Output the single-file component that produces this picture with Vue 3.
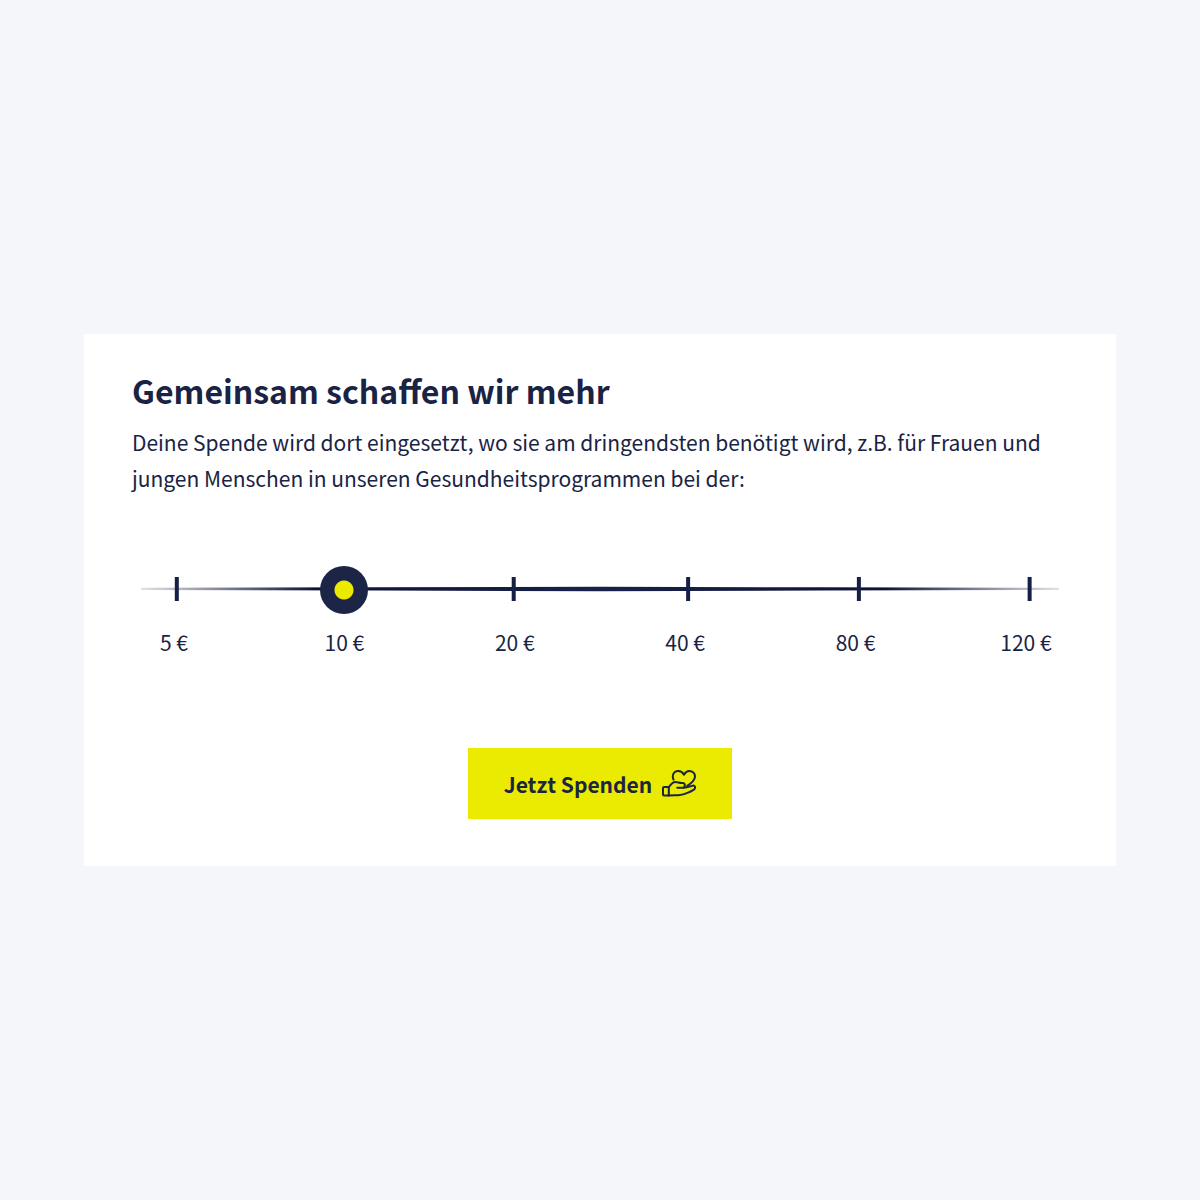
<script setup>
import { ref } from 'vue'

const amounts = [5, 10, 20, 40, 80, 120]
const selected = ref(1)

// Tick positions along the scale, in percent of its width
const ticks = [3.9, 22.2, 40.6, 59.6, 78.2, 96.8]
</script>

<template>
  <main class="page">
    <form class="card" @submit.prevent>
      <h1 class="title">Gemeinsam schaffen wir mehr</h1>
      <p id="purpose" class="text">
        Deine Spende wird dort eingesetzt, wo sie am dringendsten benötigt wird, z.B. für Frauen und
        jungen Menschen in unseren Gesundheitsprogrammen bei der:
      </p>

      <div class="slider">
        <svg class="scale" aria-hidden="true">
          <defs>
            <linearGradient id="fade">
              <stop offset="0" stop-color="#0d1338" stop-opacity="0.12" />
              <stop offset="0.04" stop-color="#0d1338" stop-opacity="0.3" />
              <stop offset="0.19" stop-color="#0d1338" stop-opacity="1" />
              <stop offset="0.5" stop-color="#1a2148" stop-opacity="1" />
              <stop offset="0.81" stop-color="#0d1338" stop-opacity="1" />
              <stop offset="0.96" stop-color="#0d1338" stop-opacity="0.3" />
              <stop offset="1" stop-color="#0d1338" stop-opacity="0.12" />
            </linearGradient>
          </defs>
          <svg width="100%" height="48" viewBox="0 0 918 48" preserveAspectRatio="none">
            <path d="M0 21.8L240 21.3L459 20.7L678 21.3L918 21.8V24L678 24.6L459 25.2L240 24.6L0 24Z" fill="url(#fade)" />
          </svg>
          <svg v-for="x in ticks" :key="x" :x="x + '%'" y="11" width="4" height="24" overflow="visible">
            <rect x="-2" width="4" height="24" fill="#161f45" />
          </svg>
        </svg>
        <input
          v-model.number="selected"
          class="range"
          type="range"
          min="0"
          max="5"
          step="1"
          aria-label="Spendenbetrag"
          aria-describedby="purpose"
          :aria-valuetext="amounts[selected] + ' €'"
        />
      </div>
      <div class="labels">
        <span v-for="amount in amounts" :key="amount" class="label">{{ amount }} €</span>
      </div>

      <button class="donate" type="submit">
        Jetzt Spenden
        <svg class="icon" viewBox="0 0 34 28" aria-hidden="true">
          <path d="M11.5 9.5C9.8 5.6 11.4 1.2 16 1.1C18.6 1 20.6 2.4 22 4.6C23.4 2.4 25 1 27.6 1.1C31.4 1.2 33.6 4.4 32.8 7.8C32 11 29.2 13.4 25.4 15.6" />
          <path d="M2 17H6.8V25.6H2Q1 25.6 1 24.6V18Q1 17 2 17Z" />
          <path d="M6.8 17.2C8.6 14.4 10.6 12 13.4 12C15.8 12 17 13 19.4 13.1H20.6C23.6 13.2 23.6 17.8 20.6 17.8H15.2" />
          <path d="M21.5 17.8C25 17.6 28 16.4 31 15.6C33 15.4 33.6 17.4 32.6 18.9C31 21.2 26.2 22.4 22.8 23.8C20 25 16 25.2 12.8 25.3L6.8 25.6" />
        </svg>
      </button>
    </form>
  </main>
</template>

<style>
body {
  margin: 0;
  background: #f4f6fa;
}
</style>

<style scoped>
.page {
  min-height: 100vh;
  display: flex;
  align-items: center;
  justify-content: center;
  color: #1a2344;
  font-family: "Noto Sans CJK SC", "Noto Sans", sans-serif;
  font-size: 21px;
  line-height: 36px;
}

.card {
  width: 86%;
  box-sizing: border-box;
  padding: 38px 48px 47px;
  display: flex;
  flex-direction: column;
  background: #fff;
}

.title {
  margin: 0 0 16px;
  font-size: 32px;
  line-height: 36px;
  font-weight: 700;
}

.text {
  margin: 0 0 70px;
}

.slider {
  display: grid;
  align-items: center;
  margin: 0 9px 10px;
}

.scale,
.range {
  grid-area: 1 / 1;
}

.scale {
  width: 100%;
  height: 48px;
}

.range {
  appearance: none;
  height: 48px;
  margin: 0 9px;
  background: transparent;
  cursor: pointer;
}

.range::-webkit-slider-runnable-track {
  height: 48px;
  background: transparent;
}

.range::-webkit-slider-thumb {
  appearance: none;
  width: 48px;
  height: 48px;
  border-radius: 50%;
  background: radial-gradient(circle, #eaeb00 9px, #1c2546 10px);
}

.range::-moz-range-thumb {
  width: 48px;
  height: 48px;
  border: 0;
  border-radius: 50%;
  background: radial-gradient(circle, #eaeb00 9px, #1c2546 10px);
}

.labels {
  display: flex;
  justify-content: space-between;
  margin: 0 14px 88px;
}

.label {
  width: 56px;
  text-align: center;
  white-space: nowrap;
}

.donate {
  align-self: center;
  display: flex;
  align-items: center;
  gap: 10px;
  height: 71px;
  padding: 0 36px;
  border: 0;
  background: #eaeb00;
  color: #1c2540;
  font: inherit;
  font-weight: 700;
  cursor: pointer;
}

.icon {
  width: 34px;
  height: 28px;
  fill: none;
  stroke: currentColor;
  stroke-width: 2;
  stroke-linecap: round;
  stroke-linejoin: round;
}
</style>
